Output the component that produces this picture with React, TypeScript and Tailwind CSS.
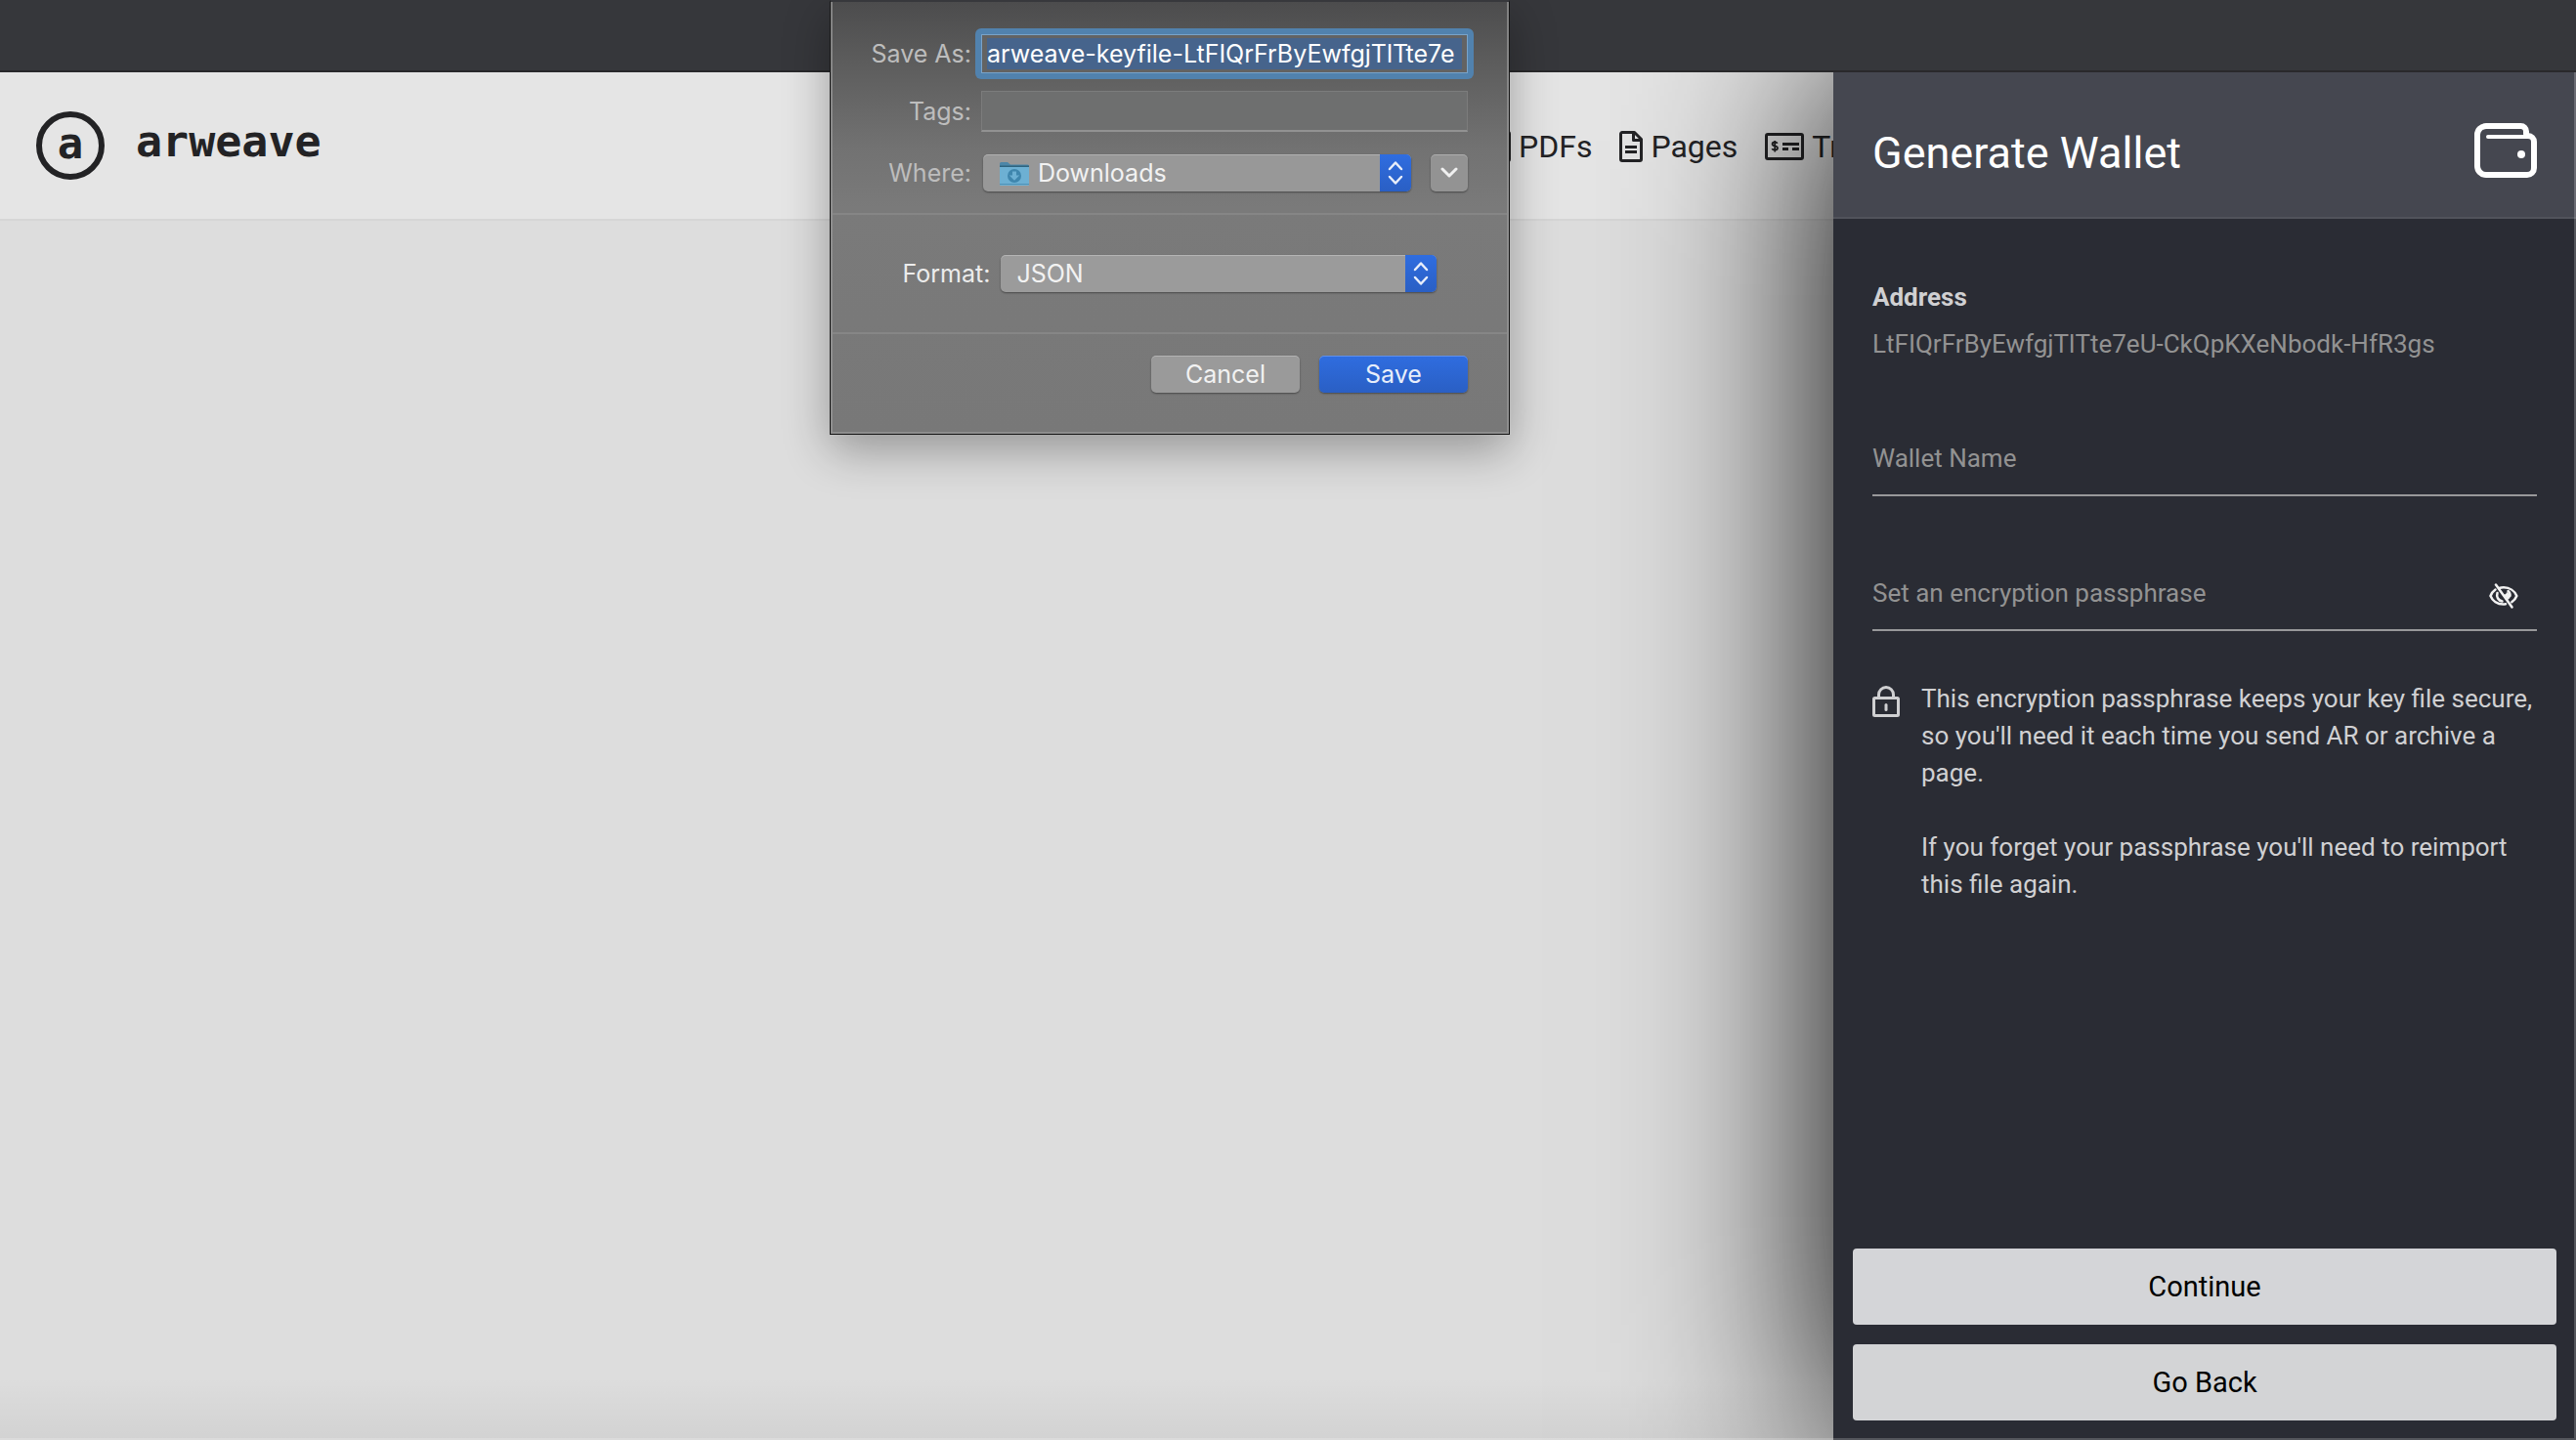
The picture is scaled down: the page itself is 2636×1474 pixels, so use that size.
import React from 'react';

function PdfIcon() {
  return (
    <svg className="shrink-0" width="24" height="32" viewBox="0 0 24 32" fill="none" stroke="currentColor" strokeWidth="3" strokeLinejoin="round" aria-hidden="true">
      <path d="M3 1.500h18a1.500 1.500 0 0 1 1.500 1.500V29a1.500 1.500 0 0 1-1.500 1.500H3A1.500 1.500 0 0 1 1.500 29V3A1.500 1.500 0 0 1 3 1.500z" />
    </svg>
  );
}

function PageIcon() {
  return (
    <svg className="shrink-0" width="24" height="32" viewBox="0 0 24 32" fill="none" stroke="currentColor" strokeWidth="3" strokeLinejoin="round" aria-hidden="true">
      <path d="M3 1.500h12.500l7 7V29a1.500 1.500 0 0 1-1.500 1.500H3A1.500 1.500 0 0 1 1.500 29V3A1.500 1.500 0 0 1 3 1.500z" />
      <path d="M14.500 2v7.500H22" />
      <path d="M6 16.500h12M6 21.500h12" />
    </svg>
  );
}

function CheckIcon() {
  return (
    <svg className="shrink-0" width="40" height="28" viewBox="0 0 40 28" fill="none" stroke="currentColor" aria-hidden="true">
      <rect x="1.500" y="1.500" width="37" height="25" rx="1.500" strokeWidth="3" />
      <path d="M18 11.500h17" strokeWidth="3" />
      <path d="M18 16.500h6M28 16.500h7" strokeWidth="3" />
      <path d="M12.800 10.800c-.6-1-1.500-1.300-2.600-1.300-1.500 0-2.600.7-2.600 1.900 0 2.800 5.400 1.300 5.400 4.200 0 1.300-1.200 2-2.800 2-1.300 0-2.400-.5-2.900-1.500M10.200 8v11.500" strokeWidth="1.800" />
    </svg>
  );
}

function WalletIcon() {
  return (
    <svg width="64" height="56" viewBox="0 0 64 56" fill="none" stroke="#fff" strokeWidth="6" strokeLinecap="round" strokeLinejoin="round" aria-hidden="true">
      <path d="M53 11V8.500A5.500 5.500 0 0 0 47.500 3H12a9 9 0 0 0-9 9v32a9 9 0 0 0 9 9h42a7 7 0 0 0 7-7V19a6 6 0 0 0-6-6" />
      <path d="M14 14h42" strokeWidth="4" />
      <circle cx="48" cy="32" r="4" fill="#fff" stroke="none" />
    </svg>
  );
}

function EyeOffIcon() {
  return (
    <svg width="30" height="26" viewBox="0 0 30 26" fill="none" stroke="#f2f2f2" strokeWidth="2.500" strokeLinecap="round" aria-hidden="true">
      <path d="M6.500 6.500C4 8.200 2.300 10.800 1.500 13c2 5 7 8.500 13 8.500 1 0 1.500 0 2.500-.2M10.500 5c1.400-.5 3-.7 4.500-.7 6 0 11.300 3.500 13.300 8.700-.9 2.400-2.600 4.600-5 6.200" />
      <path d="M8.500 10c-1.300 4 1 7.800 5 8.500M19.500 8c1.600 1.300 2.200 3 2 5" />
      <path d="M7 1.500l16.500 23" />
      <path d="M14.500 10.500c.5 1.500 3 1.500 3.500-1.500l3 2 .5 4-2.500 2z" fill="#f2f2f2" stroke="none" />
    </svg>
  );
}

function LockIcon() {
  return (
    <svg width="28" height="32" viewBox="0 0 28 32" fill="none" stroke="#d0d0d2" strokeWidth="3" aria-hidden="true">
      <rect x="1.500" y="12.500" width="25" height="18" rx="1" />
      <path d="M6.500 12V9a7.500 7.500 0 0 1 15 0v3" />
      <path d="M14 19.500v5" strokeLinecap="round" />
    </svg>
  );
}

function FolderIcon() {
  return (
    <svg width="32" height="26" viewBox="0 0 32 26" aria-hidden="true">
      <path d="M1 5V2.500A1.500 1.500 0 0 1 2.500 1h6.500l3 2.500h17.500A1.500 1.500 0 0 1 31 5v2H1z" fill="#4c86a8" />
      <rect x="1" y="4.500" width="30" height="2" fill="#2f6580" />
      <path d="M1 6h30v18a1 1 0 0 1-1 1H2a1 1 0 0 1-1-1z" fill="#6db0d3" />
      <path d="M1 23.500h30" stroke="#4f91b5" />
      <circle cx="16" cy="15" r="7" fill="#3f86ad" />
      <path d="M14 10.500h4v4h3.200L16 19.800l-5.200-5.300H14z" fill="#6db0d3" />
    </svg>
  );
}

function Stepper() {
  return (
    <span className="pointer-events-none absolute inset-y-0 right-0 flex w-8 items-center justify-center rounded-r-[5px] bg-linear-to-b from-[#2f6de0] to-[#2a5fc4]">
      <svg width="16" height="26" viewBox="0 0 16 26" fill="none" stroke="#e8eefa" strokeWidth="2.500" strokeLinecap="round" strokeLinejoin="round" aria-hidden="true">
        <path d="M2 9l6-6.500L14 9M2 17l6 6.500L14 17" />
      </svg>
    </span>
  );
}

const dialogButton =
  'block h-[38px] rounded-[5px] text-[25px] leading-8 shadow-[0_1px_2px_rgba(0,0,0,0.4),inset_0_1px_0_rgba(255,255,255,0.25)]';

function SaveDialog() {
  return (
    <section
      aria-label="Save file"
      className="absolute top-0 left-[849px] z-30 w-[696px] border border-[#151515] border-t-2 border-t-[#37383c] bg-[linear-gradient(180deg,#4c4c4d_0px,#5c5c5c_60px,#727272_150px,#7a7a7a_210px,#787878_100%)] font-[Inter,sans-serif] text-[25px] leading-8 text-[#bdbdbd] shadow-[0_16px_44px_rgba(0,0,0,0.32)]"
    >
      <div className="border-x-2 border-b-2 border-[#979797]/70">
        <div className="grid grid-cols-[142px_1fr] gap-x-[10px] pr-10 pb-[22px] pt-[27px]">
          <label htmlFor="save-as" className="py-[10px] text-right">Save As:</label>
          <div className="-mx-[6px] flex h-[52px] rounded-[6px] bg-[#5182ae] p-[6px]">
            <div className="flex min-w-0 flex-1 border border-[#79a3c9] bg-[#636363] px-[5px] py-[3px]">
              <input
                id="save-as"
                defaultValue="arweave-keyfile-LtFIQrFrByEwfgjTlTte7e"
                className="w-full min-w-0 bg-[#46648c] text-[25px] text-white outline-none"
              />
            </div>
          </div>
          <label htmlFor="tags" className="mt-3 py-[5px] text-right">Tags:</label>
          <input id="tags" className="mt-3 h-[42px] border border-b-2 border-[#7c7c7c] border-b-[#929292] bg-[#6e6f6f] px-2 outline-none" />
          <label htmlFor="where" className="mt-[23px] py-[3px] text-right">Where:</label>
          <div className="mt-[23px] flex items-center gap-5">
            <div className="relative ml-[2px] flex-1">
              <select id="where" className={`${dialogButton} w-full appearance-none bg-[#989898] pl-14 text-[#f2f2f2]`}>
                <option>Downloads</option>
              </select>
              <span className="pointer-events-none absolute top-[7px] left-4">
                <FolderIcon />
              </span>
              <Stepper />
            </div>
            <button type="button" aria-label="Expand" className={`${dialogButton} w-[38px] bg-[#939393]`}>
              <svg className="mx-auto" width="18" height="12" viewBox="0 0 18 12" fill="none" stroke="#f0f0f0" strokeWidth="3" strokeLinecap="round" strokeLinejoin="round" aria-hidden="true">
                <path d="M2 2l7 7 7-7" />
              </svg>
            </button>
          </div>
        </div>
        <div className="flex items-start justify-center gap-[11px] border-y-2 border-[#868686] py-[41px] text-[#ececec]">
          <label htmlFor="format" className="py-[3px]">Format:</label>
          <div className="relative w-[446px]">
            <select id="format" className={`${dialogButton} w-full appearance-none bg-[#9b9b9b] pl-4 text-[#f2f2f2]`}>
              <option>JSON</option>
            </select>
            <Stepper />
          </div>
        </div>
        <div className="flex justify-end gap-5 pt-[22px] pr-10 pb-10">
          <button type="button" className={`${dialogButton} w-[152px] bg-[#9a9a9a] text-[#f2f2f2]`}>Cancel</button>
          <button type="button" className={`${dialogButton} w-[152px] bg-linear-to-b from-[#2f6de0] to-[#2a5fc4] text-[#e8eefa]`}>Save</button>
        </div>
      </div>
    </section>
  );
}

function SiteHeader() {
  return (
    <header className="flex h-[152px] items-center border-b-2 border-[#d6d6d6] bg-[#e5e5e5] pr-[760px] pl-[37px] text-[#232325]">
      <a href="#home" className="flex items-center gap-[32px] font-['DejaVu_Sans_Mono',monospace] font-bold">
        <span className="flex size-[70px] items-center justify-center rounded-full border-6 border-current pb-1 text-[44px] leading-none">a</span>
        <span className="pb-[10px] text-[45px] leading-none">arweave</span>
      </a>
      <nav className="ml-auto flex w-[354px] shrink-0 items-center gap-7 overflow-hidden pt-[2px] text-[32px] leading-10 whitespace-nowrap">
        <a href="#pdfs" className="flex shrink-0 items-center gap-2"><PdfIcon />PDFs</a>
        <a href="#pages" className="flex shrink-0 items-center gap-2"><PageIcon />Pages</a>
        <a href="#transactions" className="flex min-w-0 flex-1 items-center gap-2 overflow-hidden">
          <CheckIcon />
          <span className="min-w-0 overflow-hidden">Tr</span>
        </a>
      </nav>
    </header>
  );
}

const fieldInput =
  'h-[64px] w-full border-b-2 border-[#98989a] bg-transparent pb-3 text-[26px] leading-8 text-white outline-none placeholder:text-[#929292] placeholder:opacity-100';

function WalletPanel() {
  return (
    <aside className="absolute inset-y-0 right-0 z-10 flex w-[760px] flex-col bg-[#2a2c34] shadow-[0_0_200px_#000]">
      <header className="flex h-[150px] shrink-0 items-center justify-between border-b-2 border-[#51535b] bg-[#454750] px-10 pt-3">
        <h1 className="pt-[6px] text-[45px] leading-[52px] text-white">Generate Wallet</h1>
        <WalletIcon />
      </header>
      <div className="px-10 pt-[61px] text-[26px] leading-[38px] text-[#d0d0d2]">
        <h2 className="font-bold">Address</h2>
        <p className="mt-[10px] text-[#929292]">LtFIQrFrByEwfgjTlTte7eU-CkQpKXeNbodk-HfR3gs</p>
        <div className="mt-[73px]">
          <input aria-label="Wallet Name" placeholder="Wallet Name" className={fieldInput} />
        </div>
        <div className="relative mt-[74px]">
          <input type="password" aria-label="Set an encryption passphrase" placeholder="Set an encryption passphrase" className={fieldInput} />
          <button type="button" aria-label="Show passphrase" className="absolute top-[15px] right-[19px]">
            <EyeOffIcon />
          </button>
        </div>
        <div className="-mr-2 mt-[50px] flex gap-[22px]">
          <span className="mt-[6px] shrink-0"><LockIcon /></span>
          <div className="flex flex-col gap-[38px]">
            <p>This encryption passphrase keeps your key file secure, so you'll need it each time you send AR or archive a page.</p>
            <p>If you forget your passphrase you'll need to reimport this file again.</p>
          </div>
        </div>
      </div>
      <div className="mt-auto flex flex-col gap-5 p-5 text-[29px] text-black">
        <button type="button" className="h-[78px] rounded-[4px] bg-[#d4d5d8] pt-[2px]">Continue</button>
        <button type="button" className="h-[78px] rounded-[4px] bg-[#d3d4d6] pt-[2px]">Go Back</button>
      </div>
    </aside>
  );
}

export default function App() {
  return (
    <div className="relative flex h-screen flex-col overflow-hidden bg-[#dddddd] font-[Roboto,sans-serif]">
      <div className="z-20 h-[74px] shrink-0 border-b-2 border-[#29292b] bg-[#36373b]" />
      <main className="relative flex-1">
        <SiteHeader />
        <div className="absolute inset-x-0 bottom-0 h-16 bg-linear-to-b from-transparent to-black/5" />
        <WalletPanel />
      </main>
      <SaveDialog />
      <div className="pointer-events-none absolute inset-x-0 top-[74px] bottom-0 z-40 border-r-2 border-b-2 border-white/20" />
    </div>
  );
}
